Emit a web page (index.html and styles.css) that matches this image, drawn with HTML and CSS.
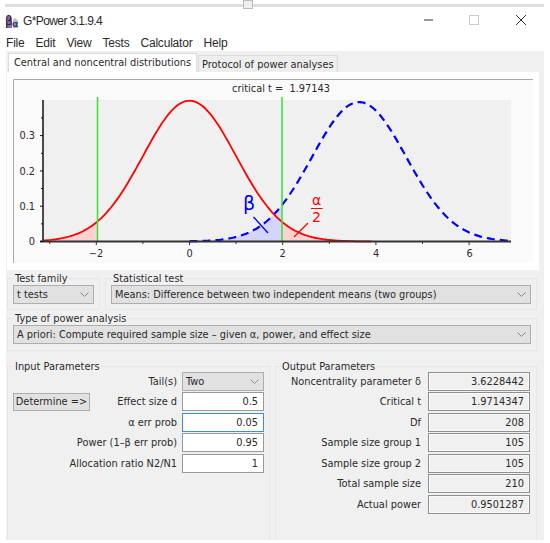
FILE: index.html
```html
<!DOCTYPE html>
<html lang="en">
<head>
    <meta charset="UTF-8">
    <title>G*Power 3.1.9.4</title>
    <link rel="stylesheet" href="styles.css">
</head>
<body>
    <div class="strip"><div class="strip__handle"></div></div>

    <div class="titlebar">
        <svg class="titlebar__icon" viewBox="0 0 15 15">
            <path d="M1 15V5l3-3 3 3v10z" fill="#8a6f8e"/>
            <path d="M8 15V7l2-2 3 3v7z" fill="#c9b7a8"/>
            <text class="icon-beta" x="0" y="12">β</text>
            <text class="icon-alpha" x="7" y="14">α</text>
        </svg>
        <div class="titlebar__name">G*Power 3.1.9.4</div>
        <div class="titlebar__buttons">
            <svg class="winbtn" viewBox="0 0 46 24"><path d="M16 12h9" stroke="#333" stroke-width="1" fill="none"/></svg>
            <svg class="winbtn" viewBox="0 0 46 24"><rect x="15.500" y="7.500" width="9" height="9" stroke="#ccc" fill="none"/></svg>
            <svg class="winbtn" viewBox="0 0 46 24"><path d="M16 7l10 10M26 7L16 17" stroke="#333" stroke-width="1" fill="none"/></svg>
        </div>
    </div>

    <div class="menu">
        <span>File</span><span>Edit</span><span>View</span><span>Tests</span><span>Calculator</span><span>Help</span>
    </div>

    <div class="app">
        <div class="tabs">
            <div class="tabs__item tabs__item_active">Central and noncentral distributions</div>
            <div class="tabs__item">Protocol of power analyses</div>
        </div>

        <div class="panel">
            <svg class="plot" id="plot" viewBox="13 79 520 184">
                <rect x="13" y="79" width="520" height="184" fill="#fafafa"/>
                <path d="M13.500 263V79.500H533" stroke="#aaa" fill="none"/>
                <rect x="43" y="100" width="468" height="141" fill="#f0f0f0"/>
                <text class="plot__label" x="281" y="92" text-anchor="middle">critical t =&#160;&#160;1.97143</text>
                <g id="curves"></g>
                <g class="plot__label" text-anchor="end">
                    <text x="35" y="139">0.3</text>
                    <text x="35" y="174.500">0.2</text>
                    <text x="35" y="210">0.1</text>
                    <text x="35" y="245">0</text>
                </g>
                <g class="plot__label" text-anchor="middle">
                    <text x="96" y="257">−2</text>
                    <text x="189.500" y="257">0</text>
                    <text x="282.500" y="257">2</text>
                    <text x="376" y="257">4</text>
                    <text x="469.500" y="257">6</text>
                </g>
                <text class="plot__beta" x="243" y="210">β</text>
                <path d="M253.500 217L268 233" stroke="#00f" stroke-width="1.300"/>
                <text class="plot__alpha" x="316.500" y="205" text-anchor="middle">α</text>
                <path d="M311 208.500H322.500" stroke="#f00"/>
                <text class="plot__alpha" x="316.500" y="222" text-anchor="middle">2</text>
                <path d="M308 223L294 237" stroke="#f00" stroke-width="1.200"/>
            </svg>
        </div>

        <div class="row row_tests">
            <fieldset class="group">
                <legend>Test family</legend>
                <div class="combo">t tests<svg class="combo__arrow" viewBox="0 0 9 5"><path d="M.5.5l4 4 4-4" fill="none" stroke="#888"/></svg></div>
            </fieldset>
            <fieldset class="group">
                <legend>Statistical test</legend>
                <div class="combo">Means: Difference between two independent means (two groups)<svg class="combo__arrow" viewBox="0 0 9 5"><path d="M.5.5l4 4 4-4" fill="none" stroke="#888"/></svg></div>
            </fieldset>
        </div>

        <fieldset class="group group_type">
            <legend>Type of power analysis</legend>
            <div class="combo">A priori: Compute required sample size – given α, power, and effect size<svg class="combo__arrow" viewBox="0 0 9 5"><path d="M.5.5l4 4 4-4" fill="none" stroke="#888"/></svg></div>
        </fieldset>

        <div class="params">
            <fieldset class="group group_params">
                <legend>Input Parameters</legend>
                <div class="field">
                    <div class="field__label">Tail(s)</div>
                    <div class="combo combo_field">Two<svg class="combo__arrow" viewBox="0 0 9 5"><path d="M.5.5l4 4 4-4" fill="none" stroke="#888"/></svg></div>
                </div>
                <div class="field">
                    <div class="button">Determine =&gt;</div>
                    <div class="field__label">Effect size d</div>
                    <div class="box">0.5</div>
                </div>
                <div class="field">
                    <div class="field__label">α err prob</div>
                    <div class="box box_focus">0.05</div>
                </div>
                <div class="field">
                    <div class="field__label">Power (1–β err prob)</div>
                    <div class="box">0.95</div>
                </div>
                <div class="field">
                    <div class="field__label">Allocation ratio N2/N1</div>
                    <div class="box">1</div>
                </div>
            </fieldset>

            <fieldset class="group group_params group_output">
                <legend>Output Parameters</legend>
                <div class="field"><div class="field__label">Noncentrality parameter δ</div><div class="box box_out">3.6228442</div></div>
                <div class="field"><div class="field__label">Critical t</div><div class="box box_out">1.9714347</div></div>
                <div class="field"><div class="field__label">Df</div><div class="box box_out">208</div></div>
                <div class="field"><div class="field__label">Sample size group 1</div><div class="box box_out">105</div></div>
                <div class="field"><div class="field__label">Sample size group 2</div><div class="box box_out">105</div></div>
                <div class="field"><div class="field__label">Total sample size</div><div class="box box_out">210</div></div>
                <div class="field"><div class="field__label">Actual power</div><div class="box box_out">0.9501287</div></div>
            </fieldset>
        </div>
    </div>

    <script src="script.js"></script>
</body>
</html>
```

FILE: styles.css
```css
html, body {
    height: 100%;
}
body {
    margin: 0;
    background: #fff;
    color: #2a2a2a;
    font-family: "DejaVu Sans", sans-serif;
    font-size: 9.800px;
    overflow: hidden;
}
.strip {
    position: relative;
    height: 3px;
    margin: 4px 6px 0 5px;
    background: #dedede;
}
.strip__handle {
    position: absolute;
    left: 238px;
    top: -4px;
    width: 8px;
    height: 7px;
    border: 1px solid #bbb;
    background: #eee;
}
.titlebar {
    display: flex;
    align-items: center;
    height: 24px;
    margin-top: 1px;
    padding-left: 5px;
}
.titlebar__icon {
    width: 15px;
    height: 15px;
    margin-right: 3px;
}
.icon-beta {
    font: 12px "DejaVu Sans", sans-serif;
    fill: #33205a;
}
.icon-alpha {
    font: bold 9px "DejaVu Sans", sans-serif;
    fill: #1c3fa8;
}
.titlebar__name {
    padding-top: 2px;
    font-size: 12px;
    font-family: "Liberation Sans", sans-serif;
    letter-spacing: -0.600px;
}
.titlebar__buttons {
    display: flex;
    margin-left: auto;
    margin-right: 4px;
}
.winbtn {
    display: block;
    width: 46px;
    height: 24px;
}
.menu {
    display: flex;
    gap: 11px;
    height: 19px;
    padding-left: 6px;
    font-family: "Liberation Sans", sans-serif;
    font-size: 12px;
    letter-spacing: -0.200px;
    line-height: 23px;
}
.app {
    height: 486px;
    margin: 0 6px;
    padding: 3px 1px 0;
    background: #f0f0f0;
    overflow: hidden;
}
.tabs {
    display: flex;
    align-items: flex-end;
    height: 18px;
    padding-left: 1px;
}
.tabs__item {
    height: 16px;
    padding: 0 3px;
    margin-right: 1px;
    border: 1px solid #dcdcdc;
    border-bottom: 0;
    background: #eee;
    line-height: 18px;
}
.tabs__item_active {
    height: 18px;
    padding: 0 5px;
    background: #fff;
}
.panel {
    height: 198px;
    margin-right: 4px;
    padding: 7px 6px 0;
    box-sizing: border-box;
    background: #fff;
}
.plot {
    display: block;
    width: 520px;
    height: 184px;
}
.plot__label {
    font-family: "DejaVu Sans", sans-serif;
    font-size: 9.800px;
    fill: #2a2a2a;
}
.plot__beta {
    font: 19px "DejaVu Sans", sans-serif;
    fill: #00f;
}
.plot__alpha {
    font: 14px "DejaVu Sans", sans-serif;
    fill: #f00;
}
.row_tests {
    display: grid;
    grid-template-columns: 93px 432px;
    gap: 5px;
    margin-top: 2px;
}
fieldset.group {
    min-width: 0;
    margin: 0;
    padding: 0 5px 5px;
    border: 1px solid #e6e6e6;
}
.group legend {
    margin-left: 1px;
    padding: 0 1px;
    line-height: 13px;
}
fieldset.group_type {
    margin: 2px 7px 0 0;
    padding-bottom: 6px;
    width: 530px;
    box-sizing: border-box;
}
.combo {
    position: relative;
    height: 19px;
    padding-left: 3px;
    border: 1px solid #adadad;
    box-sizing: border-box;
    background: #e1e1e1;
    line-height: 18px;
}
.combo__arrow {
    position: absolute;
    right: 4px;
    top: 6px;
    width: 9px;
    height: 5px;
}
.params {
    display: grid;
    grid-template-columns: 263px 262px;
    gap: 5px;
    margin-top: 9px;
}
fieldset.group_params {
    height: 200px;
    box-sizing: border-box;
}
.group_params legend {
    margin-bottom: -2px;
}
.group_output legend {
    margin-left: 0;
}
.field {
    display: flex;
    align-items: center;
    justify-content: flex-end;
    gap: 5px;
    height: 20.500px;
}
.field__label {
    text-align: right;
}
.combo_field {
    flex: 0 0 82px;
}
.box {
    flex: 0 0 82px;
    height: 19px;
    padding-right: 5px;
    border: 1px solid #999;
    box-sizing: border-box;
    background: #fff;
    line-height: 18px;
    text-align: right;
}
.box_focus {
    border-color: #3c8fd8;
}
.box_out {
    flex: 0 0 102px;
    border-color: #8f8f8f;
    box-shadow: inset 0 0 0 1px #fafafa;
    background: #f0f0f0;
    margin-right: 1px;
}
.group_output .field {
    gap: 7px;
}
.button {
    margin-right: auto;
    width: 77px;
    height: 18px;
    border: 1px solid #adadad;
    box-sizing: border-box;
    background: #e1e1e1;
    line-height: 16px;
    text-align: center;
}
```

FILE: script.js
```js
var NS = 'http://www.w3.org/2000/svg';
var curves = document.getElementById('curves');

function px(t) { return 189.5 + 46.6 * t; }
function py(d) { return 241.5 - 353 * d; }

function central(t) {
    return 0.3989 * Math.exp(-t * t / 2);
}
function noncentral(t) {
    var z = (t - 3.64) / 1.01;
    return 0.395 * Math.exp(-z * z / 2);
}

function points(fn, from, to) {
    var list = [];
    for (var t = from; t < to; t += 0.05) {
        list.push(px(t).toFixed(1) + ',' + py(fn(t)).toFixed(1));
    }
    list.push(px(to).toFixed(1) + ',' + py(fn(to)).toFixed(1));
    return list.join(' ');
}

function add(name, attrs) {
    var node = document.createElementNS(NS, name);
    for (var key in attrs) {
        node.setAttribute(key, attrs[key]);
    }
    curves.appendChild(node);
}

function area(fn, from, to, color) {
    var line = points(fn, from, to);
    add('polygon', {
        points: px(from) + ',241.5 ' + line + ' ' + px(to) + ',241.5',
        fill: color
    });
}

// shaded tails first so that the lines lie over them
area(central, -3.135, -1.97143, '#ffd2d2');
area(central, 1.97143, 3.9, '#ffd2d2');
area(noncentral, 0, 1.97143, '#d4d4ff');

add('polyline', { points: points(noncentral, 0, 6.9), fill: 'none', stroke: '#00f', 'stroke-width': 2.2, 'stroke-dasharray': '8 5' });
add('polyline', { points: points(central, -3.135, 3.9), fill: 'none', stroke: '#f00', 'stroke-width': 1.8 });

add('path', { d: 'M97.5 97V241M282 97V241', stroke: '#2ee62e', 'stroke-width': 1.5 });

// axes
add('path', { d: 'M43 100V242', stroke: '#111', 'stroke-width': 1.5 });
add('path', { d: 'M40 241.5H511', stroke: '#333', 'stroke-width': 2 });
for (var i = 0; i <= 7; i++) {
    var y = py(i * 0.05);
    add('path', { d: 'M' + (i % 2 ? 41 : 40) + ' ' + y + 'H43', stroke: '#111' });
}
for (var j = -3; j <= 6; j++) {
    var x = px(j);
    add('path', { d: 'M' + x + ' 242V' + (j % 2 ? 244 : 245), stroke: '#333' });
}
```
